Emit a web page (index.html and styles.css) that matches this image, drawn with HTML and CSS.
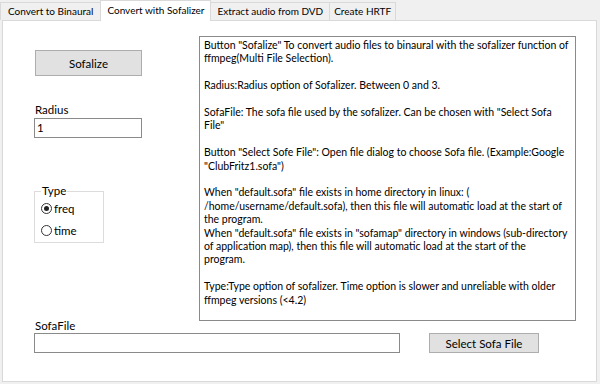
FILE: index.html
```html
<!DOCTYPE html>
<html lang="en">
<head>
    <meta charset="UTF-8">
    <title>Sofalizer</title>
    <link rel="stylesheet" href="styles.css">
</head>
<body>
    <div class="window">
        <div class="tabs">
            <div class="tab first">Convert to Binaural</div>
            <div class="tab active">Convert with Sofalizer</div>
            <div class="tab">Extract audio from DVD</div>
            <div class="tab last">Create HRTF</div>
        </div>
        <div class="panel">
            <div class="top">
                <div class="left">
                    <button class="btn sofalize">Sofalize</button>
                    <label class="label radius-label">Radius</label>
                    <div class="textbox radius">1</div>
                    <fieldset class="group">
                        <legend>Type</legend>
                        <div class="radio checked"><span class="dot"></span>freq</div>
                        <div class="radio"><span class="dot"></span>time</div>
                    </fieldset>
                </div>
                <div class="help">
                    <p>Button "Sofalize" To convert audio files to binaural with the sofalizer function of<br>ffmpeg(Multi File Selection).</p>
                    <p>Radius:Radius option of Sofalizer. Between 0 and 3.</p>
                    <p>SofaFile: The sofa file used by the sofalizer. Can be chosen with "Select Sofa<br>File"</p>
                    <p>Button "Select Sofe File": Open file dialog to choose Sofa file. (Example:Google<br>"ClubFritz1.sofa")</p>
                    <p>When "default.sofa" file exists in home directory in linux: (<br>/home/username/default.sofa), then this file will automatic load at the start of<br>the program.<br>When "default.sofa" file exists in "sofamap" directory in windows (sub-directory<br>of application map), then this file will automatic load at the start of the<br>program.</p>
                    <p>Type:Type option of sofalizer. Time option is slower and unreliable with older<br>ffmpeg versions (&lt;4.2)</p>
                </div>
            </div>
            <div class="bottom">
                <label class="label">SofaFile</label>
                <div class="file-row">
                    <div class="textbox file"></div>
                    <button class="btn select">Select Sofa File</button>
                </div>
            </div>
        </div>
    </div>
</body>
</html>
```

FILE: styles.css
```css
body {
    margin: 0;
    font-family: Lato, "Open Sans", sans-serif;
    font-size: 11px;
    color: #000;
}
.window {
    width: 600px;
    height: 384px;
    background-color: #f0f0f0;
    display: flex;
    flex-direction: column;
}
.tabs {
    display: flex;
    height: 20px;
    align-items: flex-end;
}
.tab {
    height: 18px;
    line-height: 17px;
    padding: 0 6px;
    border: 1px solid #d9d9d9;
    border-bottom: none;
    margin-left: -1px;
    box-sizing: border-box;
    background-color: #f0f0f0;
    font-size: 10px;
}
.tab.first {
    margin-left: 0;
    padding: 0 7px;
}
.tab.last {
    padding: 0 4px;
}
.tab.active {
    height: 21px;
    line-height: 19px;
    background-color: #fff;
    position: relative;
    z-index: 1;
    margin-bottom: -1px;
    padding: 0 6px;
}
.panel {
    margin: 0 3px 2px 2px;
    flex: 1;
    background-color: #fff;
    border: 1px solid #d9d9d9;
    padding: 15px 0 0 31px;
}
.top {
    display: grid;
    grid-template-columns: 108px 377px;
    column-gap: 57px;
    align-items: start;
}
.left {
    display: flex;
    flex-direction: column;
    align-items: flex-start;
    padding-top: 14px;
}
.btn {
    font-family: inherit;
    font-size: 11.5px;
    background-color: #e1e1e1;
    border: 1px solid #adadad;
    color: #000;
    padding: 0;
}
.sofalize {
    width: 107px;
    height: 26px;
    margin-left: 1px;
}
.label {
    display: block;
    font-size: 11.5px;
    line-height: 14px;
    margin-left: 1px;
}
.radius-label {
    margin-top: 27px;
    margin-bottom: 1px;
}
.textbox {
    box-sizing: border-box;
    border: 1px solid #8a8a8a;
    background-color: #fff;
    height: 20px;
    line-height: 18px;
    padding-left: 2px;
    font-size: 11.5px;
}
.radius {
    width: 108px;
}
.group {
    margin: 47px 0 0 0;
    width: 70px;
    height: 58px;
    box-sizing: border-box;
    border: 1px solid #dcdcdc;
    padding: 0 0 0 6px;
    font-size: 11.5px;
}
.group legend {
    padding: 0 1px;
    line-height: 12px;
}
.radio {
    display: flex;
    align-items: center;
    height: 22px;
    gap: 2px;
}
.dot {
    width: 11px;
    height: 11px;
    box-sizing: border-box;
    border: 1px solid #333;
    border-radius: 50%;
    display: flex;
    align-items: center;
    justify-content: center;
}
.radio.checked .dot::after {
    content: "";
    width: 5px;
    height: 5px;
    border-radius: 50%;
    background-color: #222;
}
.help {
    box-sizing: border-box;
    height: 285px;
    border: 1px solid #8a8a8a;
    padding: 2px 4px;
    white-space: nowrap;
    font-size: 10.5px;
    line-height: 13.4px;
    overflow: hidden;
}
.help p {
    margin: 0 0 13.4px 0;
}
.file-row {
    display: flex;
    align-items: center;
    gap: 29px;
}
.file {
    width: 366px;
}
.select {
    width: 110px;
    height: 20px;
}
.bottom {
    margin-top: -2px;
}
```
